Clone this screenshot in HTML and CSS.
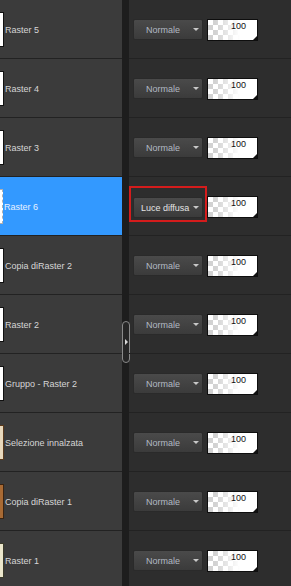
FILE: index.html
```html
<!DOCTYPE html>
<html lang="it">
<head>
    <meta charset="UTF-8">
    <title>Livelli</title>
    <link rel="stylesheet" href="styles.css">
</head>
<body>
    <div class="panel">
        <div class="layers">
            <div class="layer"><span class="thumb"></span><span class="name">Raster 5</span></div>
            <div class="layer"><span class="thumb"></span><span class="name">Raster 4</span></div>
            <div class="layer"><span class="thumb"></span><span class="name">Raster 3</span></div>
            <div class="layer active"><span class="thumb dashed"></span><span class="name">Raster 6</span></div>
            <div class="layer"><span class="thumb"></span><span class="name">Copia diRaster 2</span></div>
            <div class="layer"><span class="thumb"></span><span class="name">Raster 2</span></div>
            <div class="layer"><span class="thumb"></span><span class="name">Gruppo - Raster 2</span></div>
            <div class="layer"><span class="thumb sel"></span><span class="name">Selezione innalzata</span></div>
            <div class="layer"><span class="thumb brown"></span><span class="name">Copia diRaster 1</span></div>
            <div class="layer"><span class="thumb beige"></span><span class="name">Raster 1</span></div>
        </div>

        <div class="divider">
            <div class="handle"><span class="handle-arrow"></span></div>
        </div>

        <div class="props">
            <div class="prop"><div class="blend">Normale<span class="caret"></span></div><div class="opacity">100</div></div>
            <div class="prop"><div class="blend">Normale<span class="caret"></span></div><div class="opacity">100</div></div>
            <div class="prop"><div class="blend">Normale<span class="caret"></span></div><div class="opacity">100</div></div>
            <div class="prop marked"><div class="blend light">Luce diffusa<span class="caret"></span></div><div class="opacity">100</div><span class="mark"></span></div>
            <div class="prop"><div class="blend">Normale<span class="caret"></span></div><div class="opacity">100</div></div>
            <div class="prop"><div class="blend">Normale<span class="caret"></span></div><div class="opacity">100</div></div>
            <div class="prop"><div class="blend">Normale<span class="caret"></span></div><div class="opacity">100</div></div>
            <div class="prop"><div class="blend">Normale<span class="caret"></span></div><div class="opacity">100</div></div>
            <div class="prop"><div class="blend">Normale<span class="caret"></span></div><div class="opacity">100</div></div>
            <div class="prop"><div class="blend">Normale<span class="caret"></span></div><div class="opacity">100</div></div>
        </div>
    </div>
</body>
</html>
```

FILE: styles.css
```css
:root {
    --left-bg: #3b3b3b;
    --right-bg: #2d2d2d;
    --line: #222222;
    --strip: #1d1d1d;
    --select: #3399ff;
}

html, body {
    margin: 0;
    padding: 0;
    height: 586px;
    overflow: hidden;
    background-color: var(--right-bg);
    font-family: 'Liberation Sans', Arial, sans-serif;
    font-size: 9px;
}

.panel {
    display: flex;
    height: 586px;
}

/* left column: layer names */
.layers {
    width: 122px;
    background-color: var(--left-bg);
}

.layer {
    display: flex;
    align-items: center;
    gap: 1px;
    height: 59px;
    padding-top: 1px;
    box-sizing: border-box;
    border-bottom: 1px solid var(--line);
    color: #d6d6d6;
}

.layer.active {
    background-color: var(--select);
    color: #e8f2ff;
}

.thumb {
    flex: none;
    width: 3px;
    height: 33px;
    background-color: #ffffff;
    border: 1px solid #111111;
    border-left: none;
}

.thumb.dashed {
    width: 2px;
    border-right: 1px dashed #b0b0b0;
    border-top-color: #b0b0b0;
    border-bottom-color: #b0b0b0;
}

.thumb.sel {
    background-color: #e8d8bc;
    border-color: #5a3a1c;
}

.thumb.brown {
    background-color: #a86a34;
    border-color: #3a2412;
}

.thumb.beige {
    background-color: #eae6cc;
    border-color: #3a3a2a;
}

.name {
    white-space: nowrap;
}

/* splitter between the columns */
.divider {
    position: relative;
    width: 7px;
    background-color: var(--strip);
}

.handle {
    position: absolute;
    left: 0;
    top: 321px;
    width: 6px;
    height: 40px;
    border: 1px solid #8a8a8a;
    border-radius: 4px;
    background-color: #262626;
}

.handle-arrow {
    position: absolute;
    left: 2px;
    top: 17px;
    border-left: 3px solid #d8d8d8;
    border-top: 3px solid transparent;
    border-bottom: 3px solid transparent;
}

/* right column: blend mode + opacity */
.props {
    flex: 1;
    background-color: var(--right-bg);
}

.prop {
    position: relative;
    display: flex;
    align-items: center;
    gap: 4px;
    height: 59px;
    padding-top: 1px;
    padding-left: 4px;
    box-sizing: border-box;
    border-bottom: 1px solid var(--line);
}

.blend {
    position: relative;
    box-sizing: border-box;
    width: 70px;
    height: 21px;
    padding-left: 12px;
    line-height: 20px;
    color: #b2bac3;
    background: linear-gradient(#4a4a4a, #3b3b3b);
    border: 1px solid #2a2a2a;
    border-radius: 2px;
}

.blend.light {
    padding-left: 7px;
    color: #e4e4e4;
}

.marked .blend {
    margin-top: 2px;
}

.caret {
    position: absolute;
    right: 3px;
    top: 8px;
    border-top: 3px solid #c8c8c8;
    border-left: 3px solid transparent;
    border-right: 3px solid transparent;
}

.opacity {
    position: relative;
    box-sizing: border-box;
    width: 51px;
    height: 22px;
    padding: 1px 11px 0 0;
    text-align: right;
    color: #111111;
    border: 1px solid #0e0e0e;
    background-color: #ffffff;
    background-image:
        linear-gradient(to right, rgba(255, 255, 255, 0) 15%, #ffffff 65%),
        conic-gradient(#d2d2d2 25%, #ffffff 0 50%, #d2d2d2 0 75%, #ffffff 0);
    background-size: 100% 100%, 10px 10px;
}

.opacity::after {
    content: '';
    position: absolute;
    right: 0;
    bottom: 0;
    border-bottom: 4px solid #111111;
    border-left: 4px solid transparent;
}

/* red annotation box round the changed blend mode */
.mark {
    position: absolute;
    left: 0;
    top: 9px;
    width: 74px;
    height: 32px;
    border: 2px solid #d41c1c;
}
```
